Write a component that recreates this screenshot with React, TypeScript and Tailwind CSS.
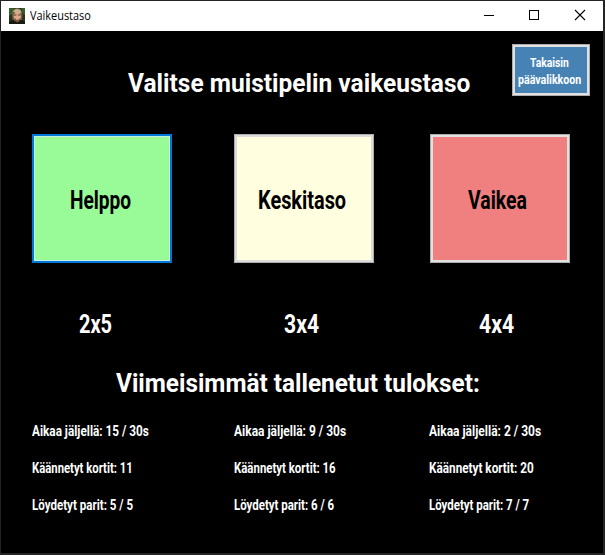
import { useLayoutEffect, useRef, useState } from "react";
import clsx from "clsx";

// A single line of text, condensed or expanded to fill its box's width.
function Line({ text, className }: { text: string; className: string }) {
  const box = useRef<HTMLDivElement>(null);
  const label = useRef<HTMLSpanElement>(null);
  const [scale, setScale] = useState(1);
  useLayoutEffect(() => {
    if (box.current && label.current && label.current.offsetWidth > 0) {
      setScale(box.current.clientWidth / label.current.offsetWidth);
    }
  }, [text]);
  return (
    <div ref={box} className={clsx("shrink-0 whitespace-nowrap", className)}>
      <span ref={label} className="inline-block origin-left" style={{ transform: `scaleX(${scale})` }}>
        {text}
      </span>
    </div>
  );
}

const levels = [
  {
    name: "Helppo",
    nameClass: "w-[61px] ml-[35px]",
    outer: "border-2 border-[#0078d7]",
    inner: "border border-[#c5efe0] bg-[#98fb98]",
    column: "w-[202px]",
    size: "2x5",
    sizeClass: "w-[33px] ml-[47px]",
    results: [
      { text: "Aikaa jäljellä: 15 / 30s", width: "w-[117px]" },
      { text: "Käännetyt kortit: 11", width: "w-[101px]" },
      { text: "Löydetyt parit: 5 / 5", width: "w-[101px]" },
    ],
  },
  {
    name: "Keskitaso",
    nameClass: "w-[88px] ml-[21px]",
    outer: "border border-[#adadad]",
    inner: "border-2 border-[#dcdcdc] bg-[#ffffe0]",
    column: "w-[195px]",
    size: "3x4",
    sizeClass: "w-[35px] ml-[50px]",
    results: [
      { text: "Aikaa jäljellä: 9 / 30s", width: "w-[112px]" },
      { text: "Käännetyt kortit: 16", width: "w-[102px]" },
      { text: "Löydetyt parit: 6 / 6", width: "w-[100px]" },
    ],
  },
  {
    name: "Vaikea",
    nameClass: "w-[59px] ml-[35px]",
    outer: "border border-[#adadad]",
    inner: "border-2 border-[#e1e1e1] bg-[#f08080]",
    column: "w-[141px] first:pl-0",
    size: "4x4",
    sizeClass: "w-[35px] ml-[49px]",
    results: [
      { text: "Aikaa jäljellä: 2 / 30s", width: "w-[112px]" },
      { text: "Käännetyt kortit: 20", width: "w-[105px]" },
      { text: "Löydetyt parit: 7 / 7", width: "w-[100px]" },
    ],
  },
];

function Portrait() {
  return (
    <svg width="16" height="16" viewBox="0 0 16 16" className="shrink-0">
      <rect width="16" height="16" fill="#25321c" />
      <path d="M0 0h5L3 6 0 8zM12 0h4v7l-2-1z" fill="#35602a" />
      <path d="M3 8Q2 1 7.500 0 13 0 13.500 7L13 12 4 13z" fill="#6e5c42" />
      <path d="M4 4Q5 1 8 1q4 0 4.500 4z" fill="#c2b391" />
      <ellipse cx="8.300" cy="8.300" rx="3.600" ry="4.700" fill="#dca889" />
      <path d="M5 7h2.500M9 7h2.500" stroke="#5a3b2a" strokeWidth="1" />
      <path d="M5 10.500q3.500.8 6.500 0-.5 4-3.200 4Q6 14 5 10.500z" fill="#84503a" />
      <path d="M7 11.200h3" stroke="#f0c8b8" strokeWidth=".8" />
      <path d="M0 16v-2l4.500-2L7 14.500h2l2.500-2.500L16 14v2z" fill="#15190f" />
    </svg>
  );
}

function TitleBar() {
  return (
    <header className="flex h-[30px] shrink-0 items-center bg-white pl-2 font-normal text-black">
      <Portrait />
      <Line text="Vaikeustaso" className="ml-[5px] w-[61px] font-['Open_Sans',sans-serif] text-[12px] leading-[16px]" />
      <svg width="106" height="12" viewBox="0 0 106 12" fill="none" stroke="#000" className="ml-[393px] -mt-0.5" shapeRendering="crispEdges">
        <path d="M0 6.500h10M45.500 1.500h9v9h-9z" />
        <path d="M91 1l10 10M101 1L91 11" shapeRendering="auto" strokeWidth="1.100" />
      </svg>
    </header>
  );
}

export default function App() {
  return (
    <div className="flex h-[555px] w-[605px] flex-col overflow-hidden border-t border-r-2 border-b-2 border-l border-[#242424] bg-black font-[Roboto,sans-serif] font-bold text-white">
      <TitleBar />
      <main className="flex flex-1 flex-col">
        <div className="flex h-[103px] shrink-0 items-start">
          <Line text="Valitse muistipelin vaikeustaso" className="mt-[38px] ml-[127px] w-[342px] text-[25px] leading-[30px]" />
          <button className="mt-[13px] ml-[42px] flex h-[52px] w-[78px] flex-col border border-[#adadad]">
            <span className="flex h-full w-full flex-col border-2 border-[#e1e1e1] bg-[#4682b4] pt-[7px] text-left text-[13px] leading-[17px]">
              <Line text="Takaisin" className="ml-[15px] w-[39px]" />
              <Line text="päävalikkoon" className="ml-[3px] w-[63px]" />
            </span>
          </button>
        </div>
        <div className="flex gap-x-[56px] pl-[31px]">
          {levels.map((level) => (
            <section key={level.name} className="w-[140px] shrink-0 first:mr-[6px]">
              <button className={clsx("block h-[129px] w-[140px] text-left text-black", level.outer)}>
                <span className={clsx("flex h-full w-full items-center pt-0.5", level.inner)}>
                  <Line text={level.name} className={clsx("text-[26px] leading-[30px]", level.nameClass)} />
                </span>
              </button>
              <Line text={level.size} className={clsx("mt-[46px] text-[26px] leading-[30px]", level.sizeClass)} />
            </section>
          ))}
        </div>
        <Line text="Viimeisimmät tallenetut tulokset:" className="mt-[30px] ml-[115px] w-[364px] text-[25px] leading-[30px]" />
        <div className="mt-[22px] flex pl-[31px]">
          {levels.map((level) => (
            <div key={level.name} className={clsx("flex shrink-0 flex-col gap-[17px] text-[15px] leading-5", level.column)}>
              {level.results.map((result) => (
                <Line key={result.text} text={result.text} className={result.width} />
              ))}
            </div>
          ))}
        </div>
      </main>
    </div>
  );
}
